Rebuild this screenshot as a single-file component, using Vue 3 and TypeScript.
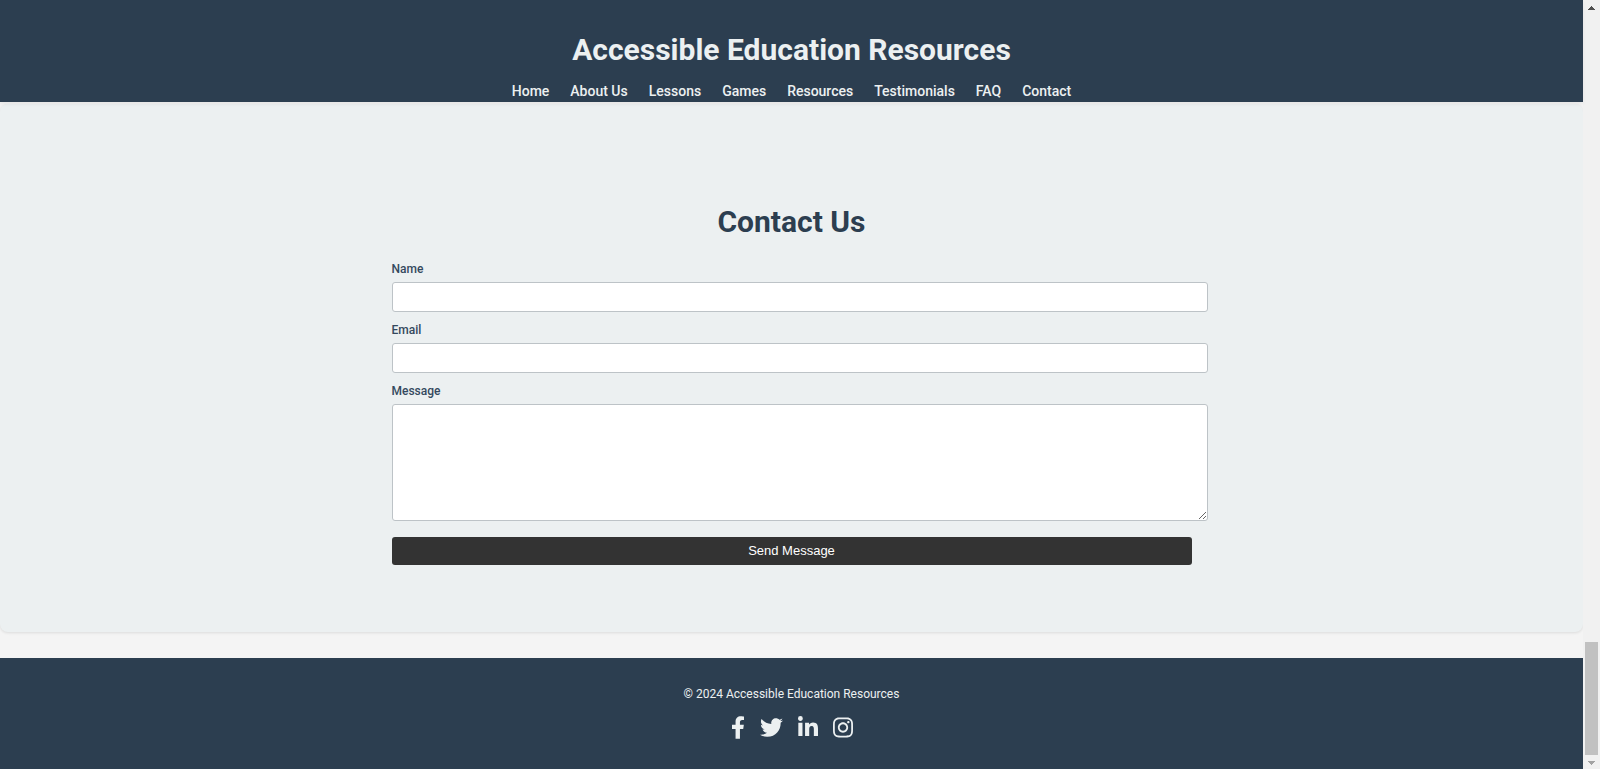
<script setup lang="ts">
interface Social {
  name: string
  box: string
  width: number
  path: string
}

const links: string[] = ['Home', 'About Us', 'Lessons', 'Games', 'Resources', 'Testimonials', 'FAQ', 'Contact']

const socials: Social[] = [
  {
    name: 'Facebook',
    box: '0 0 320 512',
    width: 14,
    path: 'M279.14 288l14.22-92.66h-88.91v-60.13c0-25.35 12.42-50.06 52.24-50.06h40.42V6.26S260.43 0 225.36 0c-73.22 0-121.08 44.38-121.08 124.72v70.62H22.89V288h81.39v224h100.17V288z',
  },
  {
    name: 'Twitter',
    box: '0 0 512 512',
    width: 23,
    path: 'M459.37 151.716c.325 4.548.325 9.097.325 13.645 0 138.72-105.583 298.558-298.558 298.558-59.452 0-114.68-17.219-161.137-47.106 8.447.974 16.568 1.299 25.34 1.299 49.055 0 94.213-16.568 130.274-44.832-46.132-.975-84.792-31.188-98.112-72.772 6.498.974 12.995 1.624 19.818 1.624 9.421 0 18.843-1.3 27.614-3.573-48.081-9.747-84.143-51.98-84.143-102.985v-1.299c13.969 7.797 30.214 12.67 47.431 13.319-28.264-18.843-46.781-51.005-46.781-87.391 0-19.492 5.197-37.36 14.294-52.954 51.655 63.675 129.3 105.258 216.365 109.807-1.624-7.797-2.599-15.918-2.599-24.04 0-57.828 46.782-104.934 104.934-104.934 30.213 0 57.502 12.67 76.67 33.137 23.715-4.548 46.456-13.32 66.599-25.34-7.798 24.366-24.366 44.833-46.132 57.827 21.117-2.273 41.584-8.122 60.426-16.243-14.292 20.791-32.161 39.308-52.628 54.253z',
  },
  {
    name: 'LinkedIn',
    box: '0 0 448 512',
    width: 20,
    path: 'M100.28 448H7.4V148.9h92.88zM53.79 108.1C24.09 108.1 0 83.5 0 53.8a53.79 53.79 0 0 1 107.58 0c0 29.7-24.1 54.3-53.79 54.3zM447.9 448h-92.68V302.4c0-34.7-.7-79.2-48.29-79.2-48.29 0-55.69 37.7-55.69 76.7V448h-92.78V148.9h89.08v40.8h1.3c12.4-23.5 42.69-48.3 87.88-48.3 94 0 111.28 61.9 111.28 142.3V448z',
  },
  {
    name: 'Instagram',
    box: '0 0 448 512',
    width: 20,
    path: 'M224.1 141c-63.6 0-114.9 51.3-114.9 114.9s51.3 114.9 114.9 114.9S339 319.5 339 255.9 287.7 141 224.1 141zm0 189.6c-41.1 0-74.7-33.5-74.7-74.7s33.5-74.7 74.7-74.7 74.7 33.5 74.7 74.7-33.6 74.7-74.7 74.7zm146.4-194.3c0 14.9-12 26.8-26.8 26.8-14.9 0-26.8-12-26.8-26.8s12-26.8 26.8-26.8 26.8 12 26.8 26.8zm76.1 27.2c-1.7-35.9-9.9-67.7-36.2-93.9-26.2-26.2-58-34.4-93.9-36.2-37-2.1-147.9-2.1-184.9 0-35.8 1.7-67.6 9.9-93.9 36.1s-34.4 58-36.2 93.9c-2.1 37-2.1 147.9 0 184.9 1.7 35.9 9.9 67.7 36.2 93.9s58 34.4 93.9 36.2c37 2.1 147.9 2.1 184.9 0 35.9-1.7 67.7-9.9 93.9-36.2 26.2-26.2 34.4-58 36.2-93.9 2.1-37 2.1-147.8 0-184.8zM398.8 388c-7.8 19.6-22.9 34.7-42.6 42.6-29.5 11.7-99.5 9-132.1 9s-102.7 2.6-132.1-9c-19.6-7.8-34.7-22.9-42.6-42.6-11.7-29.5-9-99.5-9-132.1s-2.6-102.7 9-132.1c7.8-19.6 22.9-34.7 42.6-42.6 29.5-11.7 99.5-9 132.1-9s102.7-2.6 132.1 9c19.6 7.8 34.7 22.9 42.6 42.6 11.7 29.5 9 99.5 9 132.1s2.7 102.7-9 132.1z',
  },
]
</script>

<template>
  <div class="window">
    <div class="page">
      <header class="header">
        <h1>Accessible Education Resources</h1>
        <nav class="nav" aria-label="Main">
          <a v-for="link in links" :key="link" href="#">{{ link }}</a>
        </nav>
      </header>

      <main class="contact">
        <h2>Contact Us</h2>
        <form class="form" @submit.prevent>
          <label for="name">Name</label>
          <input id="name" type="text" name="name" />
          <label for="email">Email</label>
          <input id="email" type="email" name="email" />
          <label for="message">Message</label>
          <textarea id="message" name="message"></textarea>
          <button type="submit">Send Message</button>
        </form>
      </main>

      <footer class="footer">
        <p>© 2024 Accessible Education Resources</p>
        <div class="socials">
          <a v-for="s in socials" :key="s.name" href="#" :aria-label="s.name">
            <svg :viewBox="s.box" :width="s.width" height="23" fill="currentColor" aria-hidden="true">
              <path :d="s.path" />
            </svg>
          </a>
        </div>
      </footer>
    </div>

    <div class="scrollbar" aria-hidden="true">
      <svg class="up" width="7" height="4" viewBox="0 0 7 4" shape-rendering="crispEdges">
        <path d="M3 0h1v1h1v1h1v1h1v1H0V3h1V2h1V1h1z" />
      </svg>
      <div class="thumb"></div>
      <svg class="down" width="7" height="4" viewBox="0 0 7 4" shape-rendering="crispEdges">
        <path d="M0 0h7v1H6v1H5v1H4v1H3V3H2V2H1V1H0z" />
      </svg>
    </div>
  </div>
</template>

<style>
body {
  margin: 0;
}
</style>

<style scoped>
.window {
  display: flex;
  min-height: 100vh;
  background: #f4f4f4;
  font-family: Roboto, "Liberation Sans", sans-serif;
}

.page {
  flex: 1;
  display: flex;
  flex-direction: column;
}

.header {
  position: relative;
  padding-top: 30px;
  padding-bottom: 2px;
  background: #2c3e50;
  color: #ecf0f1;
  text-align: center;
  box-shadow: 0 2px 4px rgba(0, 0, 0, 0.06);
}

h1 {
  margin: 0 0 12px;
  font-size: 30px;
  line-height: 40px;
  font-weight: 700;
}

.nav {
  display: flex;
  flex-wrap: wrap;
  justify-content: center;
  gap: 0 21px;
  font-size: 14px;
  line-height: 18px;
  font-weight: 500;
}

.nav a,
.socials a {
  color: #ecf0f1;
  text-decoration: none;
}

.contact {
  margin-top: 2px;
  padding: 98px 0 67px;
  background: #ecf0f1;
  border-radius: 8px;
  box-shadow: 0 1px 3px rgba(0, 0, 0, 0.1);
}

h2 {
  margin: 0 0 19px;
  color: #2c3e50;
  font-size: 30px;
  line-height: 40px;
  font-weight: 700;
  text-align: center;
}

.form {
  display: flex;
  flex-direction: column;
  max-width: 800px;
  margin: 0 auto;
}

label {
  margin-bottom: 5px;
  color: #34495e;
  font-size: 12px;
  line-height: 16px;
  font-weight: 500;
}

input,
textarea {
  width: 100%;
  box-sizing: content-box;
  margin: 0 0 10px;
  padding: 7px;
  border: 1px solid #bdc3c7;
  border-radius: 3px;
  background: #fff;
  font: 12px/14px Roboto, "Liberation Sans", sans-serif;
}

input {
  height: 14px;
}

textarea {
  height: 101px;
  margin-bottom: 16px;
  resize: vertical;
}

button {
  height: 28px;
  padding: 0;
  border: 0;
  border-radius: 3px;
  background: #333;
  color: #fff;
  font: 13px/28px "Liberation Sans", Arial, sans-serif;
}

.footer {
  flex: 1;
  margin-top: 26px;
  padding-top: 27px;
  background: #2c3e50;
  color: #ecf0f1;
  text-align: center;
}

.footer p {
  margin: 0 0 13px;
  font-size: 12px;
  line-height: 18px;
}

.socials {
  display: flex;
  justify-content: center;
  gap: 15px;
}

.socials svg {
  display: block;
}

.scrollbar {
  display: flex;
  flex-direction: column;
  align-items: center;
  width: 17px;
  box-sizing: border-box;
  padding: 6px 0 4px;
  background: #f1f1f1;
}

.up {
  fill: #505050;
}

.down {
  fill: #a3a3a3;
}

.thumb {
  width: 13px;
  height: 113px;
  margin: auto 0 6px;
  background: #c1c1c1;
}
</style>
